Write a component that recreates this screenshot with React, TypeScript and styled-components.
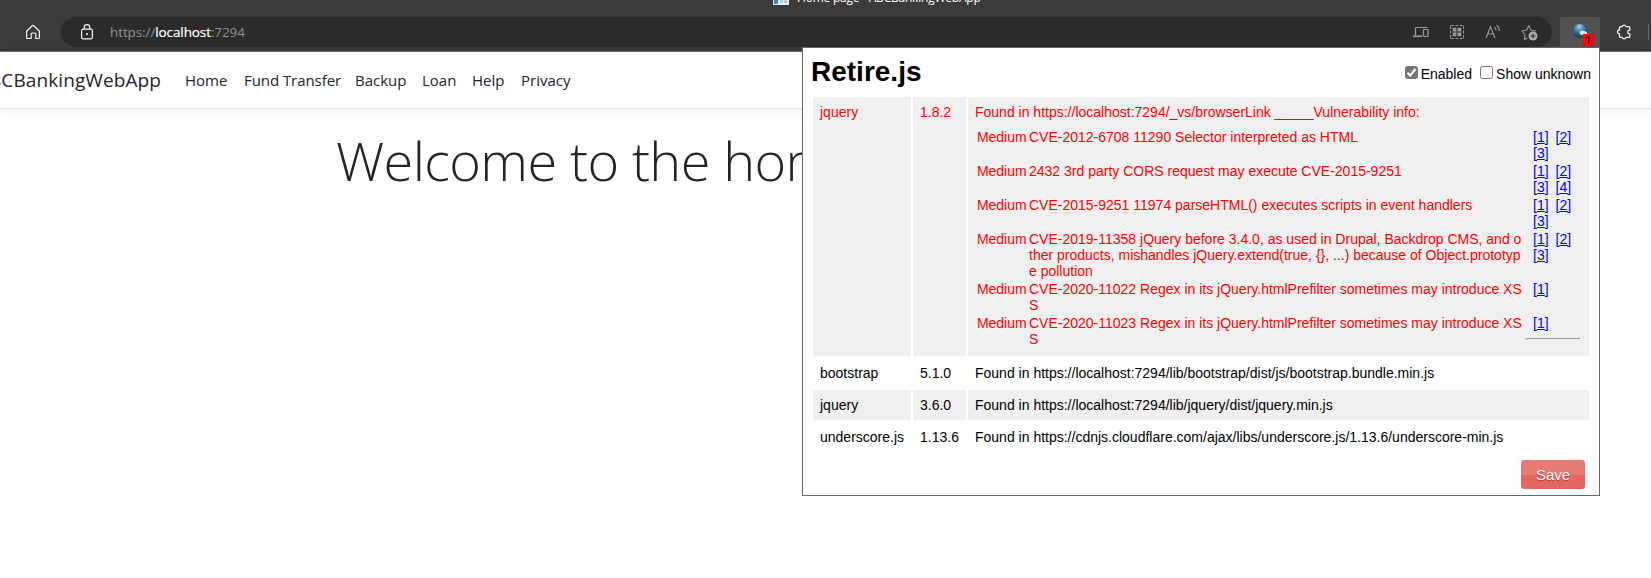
import React from "react";
import styled, { createGlobalStyle } from "styled-components";

const Global = createGlobalStyle`
  * { box-sizing: border-box; }
  html, body { margin: 0; background: #fff; overflow: hidden; }
`;

const ui = `"Open Sans", "Noto Sans", sans-serif`;
const arial = `"Liberation Sans", Arial, sans-serif`;

const Window = styled.div`
  position: relative;
  width: 1651px;
  height: 578px;
  overflow: hidden;
  display: flex;
  flex-direction: column;
  background: #fff;
`;
const Chrome = styled.header`
  height: 52px;
  flex: none;
  background: #3b3b3b;
  border-bottom: 1px solid #6b6b6b;
`;
const TabStrip = styled.div`
  height: 17px;
  padding-left: 773px;
  display: flex;
  align-items: flex-start;
  gap: 8px;
  overflow: hidden;
`;
const TabTitle = styled.span`
  font: 12px/17px ${ui};
  color: #fff;
  white-space: nowrap;
  margin-top: -11px;
  letter-spacing: -0.22px;
`;
const Toolbar = styled.div`
  height: 30px;
  display: flex;
  align-items: center;
`;
const HomeButton = styled.div`
  width: 61px;
  padding-left: 25px;
  display: flex;
`;
const AddressBar = styled.div`
  width: 1491px;
  height: 30px;
  border-radius: 15px;
  background: #2b2b2b;
  display: flex;
  align-items: center;
  padding: 0 14px 0 19px;
`;
const Url = styled.div`
  margin-left: 16px;
  flex: 1;
  font: 13.5px/20px ${ui};
  letter-spacing: -0.1px;
  color: #8f8f8f;
  b { font-weight: 400; color: #fff; -webkit-text-stroke: 0.2px #fff; }
`;
const BarIcons = styled.div`
  display: flex;
  align-items: center;
  gap: 20px;
`;
const ExtensionButton = styled.div`
  position: relative;
  margin-left: 8px;
  width: 40px;
  height: 30px;
  border-radius: 2px 2px 0 0;
  background: #525252;
  padding: 6px 12px;
`;
const Badge = styled.span`
  position: absolute;
  left: 22px;
  top: 17px;
  width: 12px;
  height: 12px;
  border-radius: 2px;
  background: #f00;
  color: #000;
  text-align: center;
  font: 600 10px/13px ${ui};
`;
const Puzzle = styled.div`
  margin-left: 16px;
  width: 32px;
  display: flex;
`;
const Divider = styled.div`
  width: 1px;
  height: 16px;
  background: #666;
`;
const Navbar = styled.nav`
  height: 57px;
  flex: none;
  display: flex;
  align-items: center;
  border-bottom: 1px solid #dee2e6;
  box-shadow: 0 4px 12px rgba(0, 0, 0, 0.05);
  color: #212529;
  font: 16px/24px ${ui};
`;
const Brand = styled.span`
  flex: none;
  font-size: 19px;
  line-height: 30px;
  width: 196px;
  margin-left: -11px;
  letter-spacing: 0.1px;
  white-space: nowrap;
`;
const NavLink = styled.span<{ $w: number; $ls?: number }>`
  flex: none;
  width: ${(p) => p.$w}px;
  font-size: 15px;
  letter-spacing: ${(p) => p.$ls ?? 0}px;
  white-space: nowrap;
`;
const Hero = styled.h1`
  margin: 18px 0 0 336px;
  font: 300 54px/67px ${ui};
  color: #212529;
  white-space: nowrap;
  letter-spacing: -0.6px;
`;
const Popup = styled.section`
  position: absolute;
  left: 802px;
  top: 47px;
  width: 798px;
  height: 449px;
  background: #fff;
  border: 1px solid #666;
  padding: 8px;
  font: 14px/16px ${arial};
  color: #000;
`;
const PopupHead = styled.div`
  height: 39px;
  display: flex;
  justify-content: space-between;
`;
const Title = styled.h2`
  margin: 0;
  font: bold 28px/31px ${arial};
`;
const Options = styled.div`
  display: flex;
  height: 16px;
  margin-top: 10px;
`;
const Option = styled.label<{ $gap?: number }>`
  display: flex;
  margin-left: ${(p) => p.$gap ?? 0}px;
  gap: 3px;
  span { line-height: 17px; }
`;
const Check = styled.i<{ $on?: boolean }>`
  width: 13px;
  height: 13px;
  border-radius: 2.5px;
  border: 1px solid #767676;
  background: ${(p) => (p.$on ? "#767676" : "#fff")};
  display: flex;
`;
const Table = styled.div`
  display: grid;
  grid-template-columns: 98px 53px 621px;
  gap: 2px;
  padding: 2px 2px 0;
`;
const Cell = styled.div<{ $shade?: boolean; $red?: boolean }>`
  padding: 7px;
  background: ${(p) => (p.$shade ? "#f0f0f0" : "#fff")};
  color: ${(p) => (p.$red ? "#f00" : "#000")};
  white-space: nowrap;
`;
const Vulns = styled.div`
  display: grid;
  grid-template-columns: 52px 499px 54px;
  row-gap: 2px;
  padding: 9px 0 2px 2px;
`;
const Severity = styled.span`
  letter-spacing: -0.05px;
`;
const Info = styled.div`
  white-space: pre;
`;
const Links = styled.div`
  padding-left: 5px;
  height: 32px;
`;
const Ref = styled.a`
  color: #00e;
  text-decoration: underline;
  margin-right: 7px;
`;
const Rule = styled.hr`
  margin: 7px 0 0 -7px;
  width: 54px;
  height: 2px;
  border: solid #9a9a9a;
  border-width: 1px 0 0 1px;
`;
const Footer = styled.div`
  display: flex;
  justify-content: flex-end;
  padding: 8px 6px 0 0;
`;
const Save = styled.button`
  width: 64px;
  height: 29px;
  border: 0;
  border-radius: 3px;
  padding: 0;
  color: #fff;
  font: 15px/29px ${arial};
  text-shadow: 0 1px 1px #a33;
  background: linear-gradient(#e77b74 50%, #e5675f 50%);
`;

const HomeIcon = () => (
  <svg width="16" height="16" viewBox="0 0 16 16" fill="none" stroke="#f2f2f2" strokeWidth="1.2" strokeLinejoin="round">
    <path d="M1.6 7.3 7.2 1.8a1.1 1.1 0 0 1 1.6 0l5.6 5.5v6.2q0 1-1 1h-2.6V10q0-1-1-1H7.2q-1 0-1 1v4.5H2.6q-1 0-1-1z" />
  </svg>
);
const LockIcon = () => (
  <svg width="14" height="16" viewBox="0 0 14 16" fill="none" stroke="#f5f5f5" strokeWidth="1.2">
    <rect x="1.6" y="5.2" width="10.8" height="9.6" rx="1.5" />
    <path d="M4.2 5.2V3.4a2.8 2.8 0 0 1 5.6 0v1.8" />
    <circle cx="7" cy="10" r="1" fill="#fff" stroke="none" />
  </svg>
);
const DevicesIcon = () => (
  <svg width="16" height="16" viewBox="0 0 16 16" fill="none" stroke="#999" strokeWidth="1.2">
    <path d="M14.5 3.5H3.5q-1 0-1 1v7M11 5.5h3.5q.5 0 .5.5v6q0 .5-.5.5H11q-.5 0-.5-.5V6q0-.5.5-.5z" />
    <path d="M0 12.3h9" strokeWidth="1.7" />
  </svg>
);
const AppsIcon = () => (
  <svg width="16" height="16" viewBox="0 0 16 16" fill="none" stroke="#999">
    <path d="M1.5 5V2.5q0-1 1-1H5M11 1.5h2.5q1 0 1 1V5M14.5 11v2.5q0 1-1 1H11M5 14.5H2.5q-1 0-1-1V11M6.5 1.5h3M6.5 14.5h3M1.5 6.5v3M14.5 6.5v3" />
    <path fill="#999" stroke="none" d="M3.7 3.7h3.8v3.8H3.7zM8.5 3.7h3.8v3.8H8.5zM3.7 8.5h3.8v3.8H3.7zM8.5 8.5h3.8v3.8H8.5z" />
  </svg>
);
const ReadIcon = () => (
  <svg width="16" height="16" viewBox="0 0 16 16" fill="none" stroke="#999" strokeWidth="1.1">
    <path d="M1 14 5.5 2.5 10 14M2.7 10h5.6M9.3 3q1.7 1.3 1.7 3.5M11.5 1q3 2 2.7 6" />
  </svg>
);
const StarIcon = () => (
  <svg width="17" height="17" viewBox="0 0 17 17" fill="none" stroke="#999" strokeWidth="1.1" strokeLinejoin="round">
    <path d="M6.5 14 3.3 15.5l.7-5L1 7l4.5-.8L7.8 1.5 10 6.2l4.8.7" />
    <circle cx="12" cy="12" r="4.5" fill="#aaa" stroke="none" />
    <path d="M12 9.5v5M9.5 12h5" stroke="#2b2b2b" />
  </svg>
);
const GlobeIcon = () => (
  <svg width="16" height="16" viewBox="0 0 16 16">
    <defs>
      <radialGradient id="globe" cx=".45" cy=".2" r=".85">
        <stop offset="0" stopColor="#a5cde6" />
        <stop offset=".45" stopColor="#3579a8" />
        <stop offset="1" stopColor="#0a2c4c" />
      </radialGradient>
    </defs>
    <circle cx="8" cy="8" r="7" fill="url(#globe)" />
    <path d="M7.5 8.5 11 7.5l4 1.5v2l-4 2-3-2z" fill="#dfe7ec" />
  </svg>
);
const PuzzleIcon = () => (
  <svg width="16" height="16" viewBox="0 0 16 16" fill="none" stroke="#f2f2f2" strokeWidth="1.3" strokeLinejoin="round">
    <path d="M4.5 2.7h1.7a2 2 0 0 1 3.9 0h2.7q1 0 1 1v2.500h-.6a1.9 1.9 0 0 0 0 3.7h.6v2.500q0 1-1 1h-2.7a2 2 0 0 1-3.900 0H4.500q-1 0-1-1V10a2 2 0 0 1 0-4V3.700q0-1 1-1z" />
  </svg>
);
const PageIcon = () => (
  <svg width="16" height="5" viewBox="0 0 16 5">
    <path fill="#e9eef2" d="M0 0h16v5H0z" />
    <path fill="#3c88bd" d="M1 0h4v4H1z" />
    <path fill="#b9cbd8" d="M7 0h3v3H7zM11 0h3v3h-3z" />
  </svg>
);
const Tick = () => (
  <svg width="11" height="11" viewBox="0 0 11 11" fill="none" stroke="#fff" strokeWidth="2">
    <path d="M1.5 5.8 4.2 8.5 9.5 2" />
  </svg>
);

const vulns = [
  { text: "CVE-2012-6708 11290 Selector interpreted as HTML", refs: 3 },
  { text: "2432 3rd party CORS request may execute CVE-2015-9251", refs: 4 },
  { text: "CVE-2015-9251 11974 parseHTML() executes scripts in event handlers", refs: 3 },
  {
    text: "CVE-2019-11358 jQuery before 3.4.0, as used in Drupal, Backdrop CMS, and o\nther products, mishandles jQuery.extend(true, {}, ...) because of Object.prototyp\ne pollution",
    refs: 3,
  },
  { text: "CVE-2020-11022 Regex in its jQuery.htmlPrefilter sometimes may introduce XS\nS", refs: 1 },
  { text: "CVE-2020-11023 Regex in its jQuery.htmlPrefilter sometimes may introduce XS\nS", refs: 1 },
];

const libraries = [
  { name: "bootstrap", version: "5.1.0", url: "https://localhost:7294/lib/bootstrap/dist/js/bootstrap.bundle.min.js" },
  { name: "jquery", version: "3.6.0", url: "https://localhost:7294/lib/jquery/dist/jquery.min.js", shade: true },
  { name: "underscore.js", version: "1.13.6", url: "https://cdnjs.cloudflare.com/ajax/libs/underscore.js/1.13.6/underscore-min.js" },
];

export default function App() {
  return (
    <Window>
      <Global />
      <Chrome>
        <TabStrip>
          <PageIcon />
          <TabTitle>Home page - ABCBankingWebApp</TabTitle>
        </TabStrip>
        <Toolbar>
          <HomeButton><HomeIcon /></HomeButton>
          <AddressBar>
            <LockIcon />
            <Url>https://<b>localhost</b>:7294</Url>
            <BarIcons>
              <DevicesIcon />
              <AppsIcon />
              <ReadIcon />
              <StarIcon />
            </BarIcons>
          </AddressBar>
          <ExtensionButton>
            <GlobeIcon />
            <Badge>1</Badge>
          </ExtensionButton>
          <Puzzle><PuzzleIcon /></Puzzle>
          <Divider />
        </Toolbar>
      </Chrome>
      <Navbar>
        <Brand>BCBankingWebApp</Brand>
        <NavLink $w={59}>Home</NavLink>
        <NavLink $w={111} $ls={-0.06}>Fund Transfer</NavLink>
        <NavLink $w={67}>Backup</NavLink>
        <NavLink $w={50}>Loan</NavLink>
        <NavLink $w={49}>Help</NavLink>
        <NavLink $w={60}>Privacy</NavLink>
      </Navbar>
      <Hero>Welcome to the home page</Hero>
      <Popup>
        <PopupHead>
          <Title>Retire.js</Title>
          <Options>
            <Option><Check $on><Tick /></Check><span>Enabled</span></Option>
            <Option $gap={8}><Check /><span>Show unknown</span></Option>
          </Options>
        </PopupHead>
        <Table>
          <Cell $shade $red>jquery</Cell>
          <Cell $shade $red>1.8.2</Cell>
          <Cell $shade $red>
            Found in https://localhost:7294/_vs/browserLink _____Vulnerability info:
            <Vulns>
              {vulns.map((v, i) => (
                <React.Fragment key={v.text}>
                  <Severity>Medium</Severity>
                  <Info>{v.text}</Info>
                  <Links>
                    {Array.from({ length: v.refs }, (_, n) => (
                      <React.Fragment key={n}>
                        {n === 2 && <br />}
                        <Ref>[{n + 1}]</Ref>
                      </React.Fragment>
                    ))}
                    {i === vulns.length - 1 && <Rule />}
                  </Links>
                </React.Fragment>
              ))}
            </Vulns>
          </Cell>
          {libraries.map((l) => (
            <React.Fragment key={l.name}>
              <Cell $shade={l.shade}>{l.name}</Cell>
              <Cell $shade={l.shade}>{l.version}</Cell>
              <Cell $shade={l.shade}>Found in {l.url}</Cell>
            </React.Fragment>
          ))}
        </Table>
        <Footer><Save>Save</Save></Footer>
      </Popup>
    </Window>
  );
}
